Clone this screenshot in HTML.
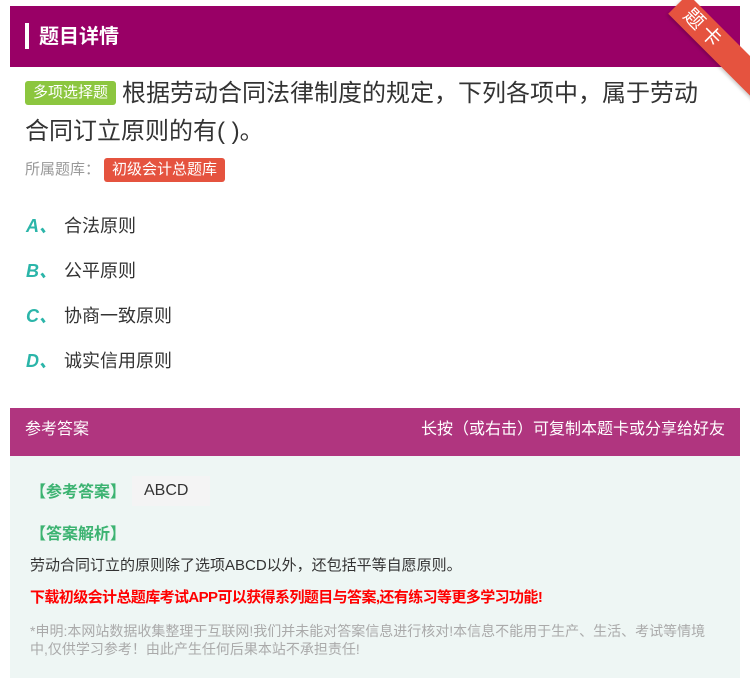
<!DOCTYPE html>
<html><head><meta charset="utf-8"><style>
body{margin:0;width:750px;height:678px;background:#fff;font-family:"Liberation Sans","Noto Sans CJK SC",sans-serif;position:relative;overflow:hidden}
.hd{position:absolute;left:10px;top:6px;width:730px;height:61px;background:#990066}
.hd .bar{position:absolute;left:15px;top:17px;width:4px;height:26px;background:#fff}
.hd .t{position:absolute;left:29px;top:14px;color:#fff;font-size:20px;font-weight:bold}
.rib{position:absolute;left:688px;top:-6px;width:120px;height:28px;background:#e5533f;transform:rotate(45deg);transform-origin:0 0;color:#fff;font-size:20px;line-height:28px;padding-left:12px;letter-spacing:4px;box-shadow:0 2px 3px rgba(0,0,0,.2)}
.q{position:absolute;left:25px;top:75px;width:690px;font-size:24px;line-height:38px;color:#333}
.tag{display:inline-block;background:#8cc63f;color:#fff;font-size:15px;line-height:24px;padding:0 8px;border-radius:3px;vertical-align:4px;margin-right:6px}
.lib{position:absolute;left:25px;top:158px;font-size:15px;color:#999}
.lib span{display:inline-block;background:#e5533f;color:#fff;padding:0 8px;line-height:24px;border-radius:3px;margin-left:4px}
.op{position:absolute;left:26px;font-size:18px;color:#333}
.op b{color:#2bb5a9;font-style:italic;display:inline-block;width:38px}
.ah{position:absolute;left:10px;top:408px;width:730px;height:48px;background:#b0357f;color:#fff;font-size:16px;line-height:44px}
.ab{position:absolute;left:10px;top:456px;width:730px;height:222px;background:#eef6f4}
</style></head><body>
<div class="hd"><div class="bar"></div><div class="t">题目详情</div></div>
<div class="rib">题卡</div>
<div class="q"><span class="tag">多项选择题</span>根据劳动合同法律制度的规定，下列各项中，属于劳动合同订立原则的有( )。</div>
<div class="lib">所属题库：<span>初级会计总题库</span></div>
<div class="op" style="top:212px"><b>A、</b>合法原则</div>
<div class="op" style="top:257px"><b>B、</b>公平原则</div>
<div class="op" style="top:302px"><b>C、</b>协商一致原则</div>
<div class="op" style="top:347px"><b>D、</b>诚实信用原则</div>
<div class="ah"><span style="position:absolute;left:15px">参考答案</span><span style="position:absolute;right:15px">长按（或右击）可复制本题卡或分享给好友</span></div>
<div class="ab">
<div style="position:absolute;left:20px;top:22px;color:#3cb371;font-size:16px;font-weight:bold">【参考答案】</div>
<div style="position:absolute;left:122px;top:20px;width:78px;height:30px;background:#f4f4f4;color:#333;font-size:16px;line-height:30px;padding-left:12px;box-sizing:border-box">ABCD</div>
<div style="position:absolute;left:20px;top:64px;color:#3cb371;font-size:16px;font-weight:bold">【答案解析】</div>
<div style="position:absolute;left:20px;top:98px;color:#333;font-size:15px">劳动合同订立的原则除了选项ABCD以外，还包括平等自愿原则。</div>
<div style="position:absolute;left:20px;top:130px;color:#f00;font-size:15px;font-weight:bold;letter-spacing:-0.6px">下载初级会计总题库考试APP可以获得系列题目与答案,还有练习等更多学习功能!</div>
<div style="position:absolute;left:20px;top:166px;width:690px;color:#aaa;font-size:14px;line-height:18px">*申明:本网站数据收集整理于互联网!我们并未能对答案信息进行核对!本信息不能用于生产、生活、考试等情境中,仅供学习参考！由此产生任何后果本站不承担责任!</div>
</div>
</body></html>
